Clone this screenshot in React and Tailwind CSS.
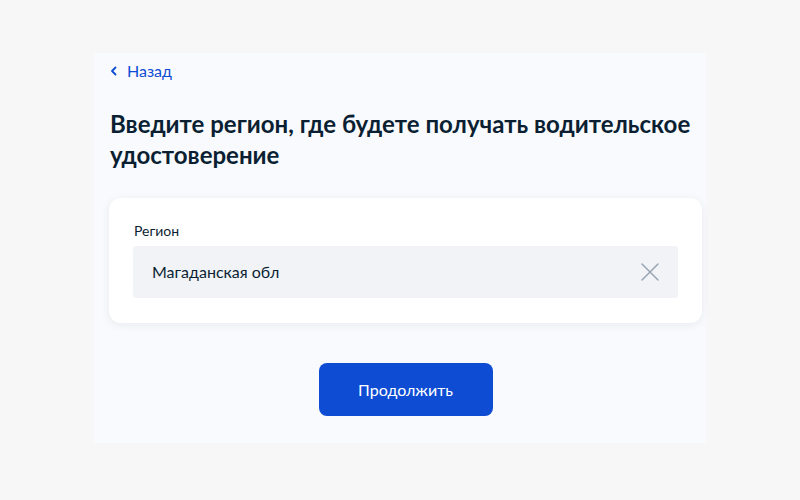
import { useState } from "react";

export default function App() {
  const [region, setRegion] = useState("Магаданская обл");

  return (
    <div className="w-[800px] h-[500px] bg-[#f7f7f7] pt-[53px] font-['Lato','Noto_Sans',sans-serif]">
      <div className="ml-[94px] w-[612px] h-[390px] bg-[#f8fafd] pl-[15px] pr-[4px] pt-[8px]">
        {/* back link */}
        <a href="#" className="flex items-center gap-[10px] h-[20px] text-[16px] leading-[20px] text-[#0d4cd3]">
          <svg width="7" height="10" viewBox="0 0 7 10" className="ml-[1px]">
            <path d="M5.5 1.5 L2 5 L5.5 8.5" fill="none" stroke="#0d4cd3" strokeWidth="1.8" strokeLinecap="round" strokeLinejoin="round" />
          </svg>
          <span>Назад</span>
        </a>

        <h1 className="mt-[27px] pl-[1px] text-[24px] leading-[31px] font-bold text-[#0b1f33]">
          Введите регион, где будете получать водительское удостоверение
        </h1>

        {/* region card */}
        <div className="mt-[28px] bg-white rounded-[12px] shadow-[0_2px_10px_rgba(11,31,51,0.07)] px-[24px] pt-[24px] pb-[25px]">
          <div className="text-[14px] leading-[18px] text-[#0b1f33] pl-[1px]">Регион</div>
          <div className="mt-[6px] h-[52px] bg-[#f1f3f7] rounded-[4px] flex items-center pl-[19px] pr-[18px]">
            <input
              value={region}
              onChange={(e) => setRegion(e.target.value)}
              className="flex-1 bg-transparent outline-none text-[16px] text-[#0b1f33]"
            />
            <button onClick={() => setRegion("")} className="w-[20px] h-[20px] flex items-center justify-center">
              <svg width="18" height="18" viewBox="0 0 18 18">
                <path d="M1 1 L17 17 M17 1 L1 17" stroke="#9aa3b2" strokeWidth="1.5" strokeLinecap="round" />
              </svg>
            </button>
          </div>
        </div>

        <div className="mt-[40px] flex justify-center">
          <button className="w-[174px] h-[53px] rounded-[8px] bg-[#0d4cd3] text-white text-[16px]">
            Продолжить
          </button>
        </div>
      </div>
    </div>
  );
}
